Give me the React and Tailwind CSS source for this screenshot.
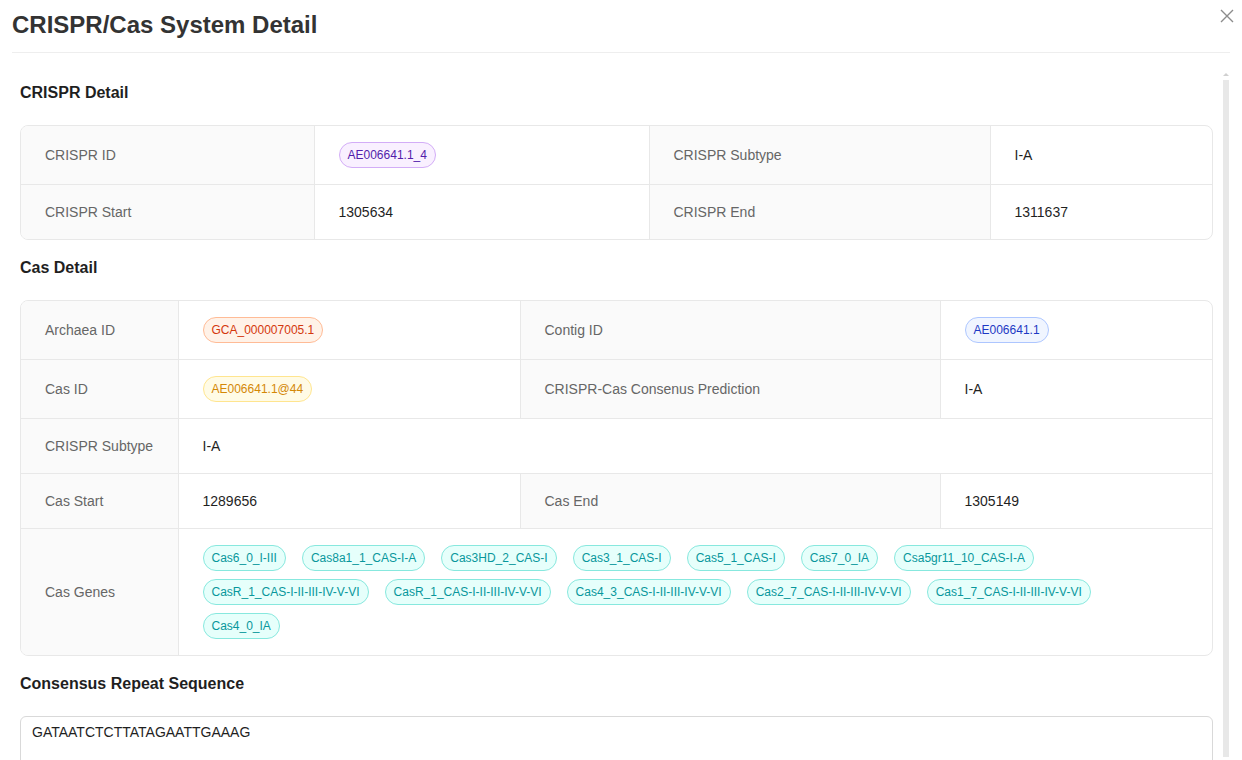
import React from "react";

const font = { fontFamily: '"Liberation Sans", Arial, sans-serif' };

const tagStyles = {
  purple: "bg-[#f9f0ff] border-[#d3adf7] text-[#531dab]",
  volcano: "bg-[#fff2e8] border-[#ffbb96] text-[#d4380d]",
  geekblue: "bg-[#f0f5ff] border-[#adc6ff] text-[#1d39c4]",
  gold: "bg-[#fffbe6] border-[#ffe58f] text-[#d48806]",
  cyan: "bg-[#e6fffb] border-[#87e8de] text-[#08979c]",
};

const Tag = ({ color, children, className = "" }) => (
  <span
    className={`inline-block h-[26px] leading-[24px] px-2 border rounded-full text-xs whitespace-nowrap ${tagStyles[color]} ${className}`}
  >
    {children}
  </span>
);

const casGenes = [
  "Cas6_0_I-III",
  "Cas8a1_1_CAS-I-A",
  "Cas3HD_2_CAS-I",
  "Cas3_1_CAS-I",
  "Cas5_1_CAS-I",
  "Cas7_0_IA",
  "Csa5gr11_10_CAS-I-A",
  "CasR_1_CAS-I-II-III-IV-V-VI",
  "CasR_1_CAS-I-II-III-IV-V-VI",
  "Cas4_3_CAS-I-II-III-IV-V-VI",
  "Cas2_7_CAS-I-II-III-IV-V-VI",
  "Cas1_7_CAS-I-II-III-IV-V-VI",
  "Cas4_0_IA",
];

// label / value cells
const Label = ({ children, last }) => (
  <td
    className={`bg-[#fafafa] text-[#666] px-6 py-4 leading-[22px] border-r border-[#e8e8e8] ${
      last ? "" : "border-b"
    }`}
  >
    {children}
  </td>
);

const Value = ({ children, last, right, colSpan }) => (
  <td
    colSpan={colSpan}
    className={`text-[#1f1f1f] px-6 py-4 leading-[22px] border-[#e8e8e8] ${
      right ? "" : "border-r"
    } ${last ? "" : "border-b"}`}
  >
    {children}
  </td>
);

const Section = ({ title }) => (
  <h3 className="text-base font-bold text-[#1f1f1f] leading-6 mb-5">{title}</h3>
);

export default function App() {
  return (
    <div
      className="w-full h-[760px] overflow-hidden bg-white text-sm"
      style={font}
    >
      {/* Header */}
      <div className="relative mx-3 pt-[9px] pb-[11px] border-b border-[#eeeeee]">
        <h2 className="text-2xl font-bold leading-8 text-[#333]">
          CRISPR/Cas System Detail
        </h2>
        <button className="absolute right-[-4px] top-[9px] text-[#8c8c8c]">
          <svg width="14" height="14" viewBox="0 0 14 14">
            <path
              d="M1 1 L13 13 M13 1 L1 13"
              stroke="currentColor"
              strokeWidth="1.4"
              fill="none"
            />
          </svg>
        </button>
      </div>

      {/* Body */}
      <div className="ml-3 w-[1218px] h-[707px] flex">
        <div className="flex-1 overflow-hidden pl-2 pr-[9px] pt-[28px]">
          <Section title="CRISPR Detail" />
          <div className="border border-[#e8e8e8] rounded-lg overflow-hidden">
            <table className="w-full table-fixed border-collapse">
              <colgroup>
                <col className="w-[293px]" />
                <col className="w-[335px]" />
                <col className="w-[341px]" />
                <col />
              </colgroup>
              <tbody>
                <tr>
                  <Label>CRISPR ID</Label>
                  <Value>
                    <Tag color="purple">AE006641.1_4</Tag>
                  </Value>
                  <Label>CRISPR Subtype</Label>
                  <Value right>I-A</Value>
                </tr>
                <tr>
                  <Label last>CRISPR Start</Label>
                  <Value last>1305634</Value>
                  <Label last>CRISPR End</Label>
                  <Value last right>
                    1311637
                  </Value>
                </tr>
              </tbody>
            </table>
          </div>

          <div className="mt-4">
            <Section title="Cas Detail" />
          </div>
          <div className="border border-[#e8e8e8] rounded-lg overflow-hidden">
            <table className="w-full table-fixed border-collapse">
              <colgroup>
                <col className="w-[157px]" />
                <col className="w-[342px]" />
                <col className="w-[420px]" />
                <col />
              </colgroup>
              <tbody>
                <tr>
                  <Label>Archaea ID</Label>
                  <Value>
                    <Tag color="volcano">GCA_000007005.1</Tag>
                  </Value>
                  <Label>Contig ID</Label>
                  <Value right>
                    <Tag color="geekblue">AE006641.1</Tag>
                  </Value>
                </tr>
                <tr>
                  <Label>Cas ID</Label>
                  <Value>
                    <Tag color="gold">AE006641.1@44</Tag>
                  </Value>
                  <Label>CRISPR-Cas Consenus Prediction</Label>
                  <Value right>I-A</Value>
                </tr>
                <tr>
                  <Label>CRISPR Subtype</Label>
                  <Value right colSpan={3}>
                    I-A
                  </Value>
                </tr>
                <tr>
                  <Label>Cas Start</Label>
                  <Value>1289656</Value>
                  <Label>Cas End</Label>
                  <Value right>1305149</Value>
                </tr>
                <tr>
                  <Label last>Cas Genes</Label>
                  <Value last right colSpan={3}>
                    <div className="flex flex-wrap gap-y-2">
                      {casGenes.map((g, i) => (
                        <Tag key={i} color="cyan" className="mr-4">
                          {g}
                        </Tag>
                      ))}
                    </div>
                  </Value>
                </tr>
              </tbody>
            </table>
          </div>

          <div className="mt-4">
            <Section title="Consensus Repeat Sequence" />
          </div>
          <div className="h-[60px] border border-[#d9d9d9] rounded-md px-[11px] py-1 leading-[22px] text-[#1f1f1f]">
            GATAATCTCTTATAGAATTGAAAG
          </div>
        </div>

        {/* scrollbar */}
        <div className="w-2 flex flex-col items-center pt-[20px]">
          <div className="w-0 h-0 border-x-[3px] border-x-transparent border-b-[3px] border-b-[#d0d0d0]" />
          <div className="mt-[4px] w-[6px] h-[677px] bg-[#e8e8e8]" />
        </div>
      </div>
    </div>
  );
}
